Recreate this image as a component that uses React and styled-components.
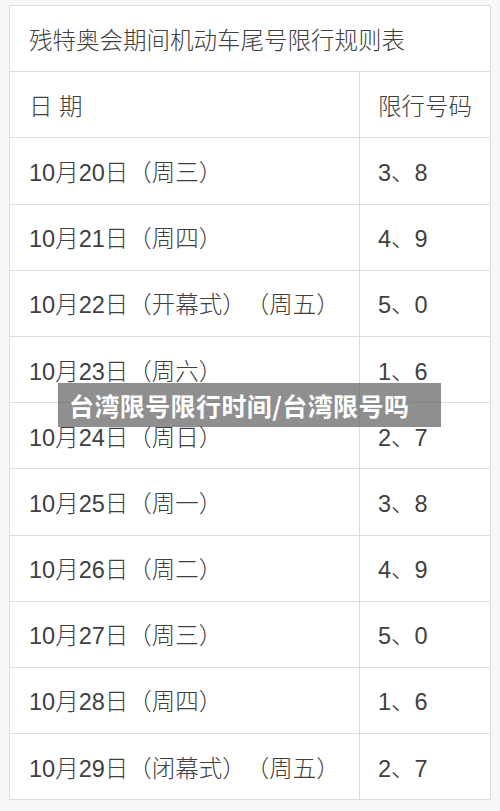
import React from "react";
import styled, { createGlobalStyle } from "styled-components";

const Global = createGlobalStyle`
  html, body { margin: 0; padding: 0; background: #f8f8f8; }
  body { font-family: "Noto Sans CJK SC", "Noto Sans", sans-serif; }
`;

const Page = styled.div`
  position: relative;
  width: 500px;
  height: 811px;
  padding: 5px 10px 0 9px;
  box-sizing: border-box;
`;

const Table = styled.div`
  display: grid;
  grid-template-columns: 350px 131px;
  grid-auto-rows: 66.2px;
  width: 481px;
  background: #fff;
  border-top: 1px solid #dcdcdc;
  border-left: 1px solid #dcdcdc;
  box-sizing: border-box;
`;

const Cell = styled.div`
  grid-column: ${(p) => (p.$span ? "1 / span 2" : "auto")};
  display: flex;
  align-items: center;
  padding-left: ${(p) => (p.$num ? "18px" : "19px")};
  border-right: 1px solid #dcdcdc;
  border-bottom: 1px solid #dcdcdc;
  box-sizing: border-box;
  font-family: "Liberation Sans", "Noto Sans CJK SC", sans-serif;
  font-size: 23.5px;
  font-weight: 300;
  color: #404040;
  white-space: pre;
  text-spacing-trim: space-all;
  font-kerning: none;
`;

const Banner = styled.div`
  position: absolute;
  left: 58px;
  top: 383px;
  width: 383px;
  height: 44px;
  background: rgba(100, 100, 100, 0.72);
  display: flex;
  align-items: center;
  padding-left: 11px;
  box-sizing: border-box;
  color: #fff;
  font-size: 25px;
  font-weight: 700;
  letter-spacing: 0.4px;
`;

const rows = [
  ["10月20日（周三）", "3、8"],
  ["10月21日（周四）", "4、9"],
  ["10月22日（开幕式）（周五）", "5、0"],
  ["10月23日（周六）", "1、6"],
  ["10月24日（周日）", "2、7"],
  ["10月25日（周一）", "3、8"],
  ["10月26日（周二）", "4、9"],
  ["10月27日（周三）", "5、0"],
  ["10月28日（周四）", "1、6"],
  ["10月29日（闭幕式）（周五）", "2、7"],
];

export default function App() {
  return (
    <>
      <Global />
      <Page>
        <Table>
          <Cell $span>残特奥会期间机动车尾号限行规则表</Cell>
          <Cell>日 期</Cell>
          <Cell $num>限行号码</Cell>
          {rows.map(([d, n]) => (
            <React.Fragment key={d}>
              <Cell>{d}</Cell>
              <Cell $num>{n}</Cell>
            </React.Fragment>
          ))}
        </Table>
        <Banner>台湾限号限行时间/台湾限号吗</Banner>
      </Page>
    </>
  );
}
